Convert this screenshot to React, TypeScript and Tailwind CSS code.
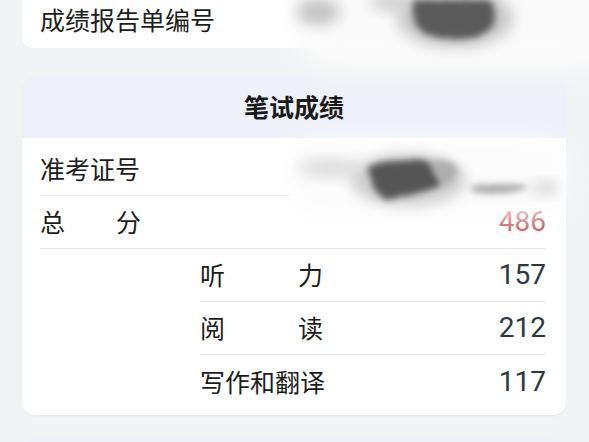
import React from 'react';

const cjk = { fontFamily: '"Noto Sans CJK SC", "Noto Sans", sans-serif' };
const num = { fontFamily: 'Roboto, "Noto Sans", sans-serif' };

interface RowProps {
  label: React.ReactNode;
  value?: string;
  red?: boolean;
  indent?: boolean;
  last?: boolean;
}

const Row: React.FC<RowProps> = ({ label, value, red, indent, last }) => (
  <div className={`pr-[20px] ${indent ? 'pl-[178px]' : 'pl-[18px]'}`}>
    <div className={`flex items-center justify-between h-[53px] ${last ? '' : 'border-b border-[#e6e8eb]'}`}>
      <div className="text-[25px] text-[#1c1c1c]" style={cjk}>
        {label}
      </div>
      {value && (
        <div className={`text-[28px] ${red ? 'text-[#c9545c]' : 'text-[#2b3942]'}`} style={num}>
          {value}
        </div>
      )}
    </div>
  </div>
);

const Spread: React.FC<{ a: string; b: string; w: string }> = ({ a, b, w }) => (
  <div className={`flex justify-between ${w}`}>
    <span>{a}</span>
    <span>{b}</span>
  </div>
);

const Smudges = () => (
  <svg className="absolute inset-0 pointer-events-none" width="589" height="442" viewBox="0 0 589 442">
    <defs>
      <filter id="wash" x="-50%" y="-50%" width="200%" height="200%">
        <feGaussianBlur stdDeviation="12" />
      </filter>
      <filter id="soft" x="-50%" y="-50%" width="200%" height="200%">
        <feGaussianBlur stdDeviation="7" />
      </filter>
      <filter id="grain" x="-50%" y="-50%" width="200%" height="200%">
        <feTurbulence type="fractalNoise" baseFrequency="0.9" numOctaves="2" seed="3" result="n" />
        <feDisplacementMap in="SourceGraphic" in2="n" scale="12" xChannelSelector="R" yChannelSelector="G" result="d" />
        <feGaussianBlur in="d" stdDeviation="3" />
      </filter>
    </defs>
    {/* top wash */}
    <rect x="296" y="-30" width="330" height="102" rx="40" fill="#fafafa" filter="url(#wash)" />
    <ellipse cx="318" cy="12" rx="22" ry="13" fill="#c4c4c4" filter="url(#soft)" />
    <ellipse cx="392" cy="3" rx="22" ry="8" fill="#cdcdcd" filter="url(#soft)" />
    <ellipse cx="455" cy="18" rx="58" ry="30" fill="#c8c8c8" filter="url(#soft)" />
    <g filter="url(#grain)">
      <path d="M414 0 L490 0 Q498 12 494 24 Q486 38 460 39 Q430 40 418 28 Q410 14 414 0 Z" fill="#5a5a5a" />
    </g>
    {/* middle wash */}
    <rect x="290" y="140" width="276" height="76" rx="30" fill="#fcfcfc" filter="url(#wash)" />
    <ellipse cx="330" cy="168" rx="32" ry="10" fill="#dedede" filter="url(#soft)" />
    <ellipse cx="408" cy="180" rx="58" ry="26" fill="#cfcfcf" filter="url(#soft)" />
    <g filter="url(#grain)">
      <path d="M368 166 Q398 158 428 160 L442 186 Q418 194 386 200 Q372 194 368 166 Z" fill="#545454" />
      <path d="M430 160 Q450 158 458 168 Q456 182 444 186 Z" fill="#adadad" />
      <path d="M470 186 Q500 183 528 185 Q528 192 500 193 Q478 194 470 190 Z" fill="#a6a6a6" />
    </g>
    <ellipse cx="545" cy="188" rx="14" ry="7" fill="#d8d8d8" filter="url(#soft)" />
  </svg>
);

export default function App() {
  return (
    <div className="relative w-[589px] h-[442px] overflow-hidden bg-[#f2f3f5]">
      <div className="mx-[22px] w-[544px] h-[48px] bg-white rounded-b-[12px] pl-[18px] pt-[3px]">
        <div className="text-[25px] leading-[32px] text-[#1c1c1c]" style={cjk}>
          成绩报告单编号
        </div>
      </div>

      <div className="mt-[27px] mx-[22px] w-[544px] bg-white rounded-[12px] overflow-hidden shadow-[0_1px_2px_rgba(0,0,0,0.05)] pb-[7px]">
        <div className="h-[63px] bg-[#eef1f9] flex items-center justify-center">
          <div className="text-[25px] font-bold text-[#1a1a1a]" style={cjk}>
            笔试成绩
          </div>
        </div>
        <div className="pt-[5px]">
          <div className="pl-[18px]">
            <div className="w-[250px] border-b border-[#e6e8eb] h-[53px] flex items-center text-[25px] text-[#1c1c1c]" style={cjk}>
              准考证号
            </div>
          </div>
          <Row label={<Spread a="总" b="分" w="w-[101px]" />} value="486" red />
          <Row indent label={<Spread a="听" b="力" w="w-[123px]" />} value="157" />
          <Row indent label={<Spread a="阅" b="读" w="w-[123px]" />} value="212" />
          <Row indent last label="写作和翻译" value="117" />
        </div>
      </div>

      <div className="mt-[24px] mx-[22px] w-[544px] h-[40px] bg-[#eef1f9] rounded-t-[12px]" />

      <Smudges />
    </div>
  );
}
